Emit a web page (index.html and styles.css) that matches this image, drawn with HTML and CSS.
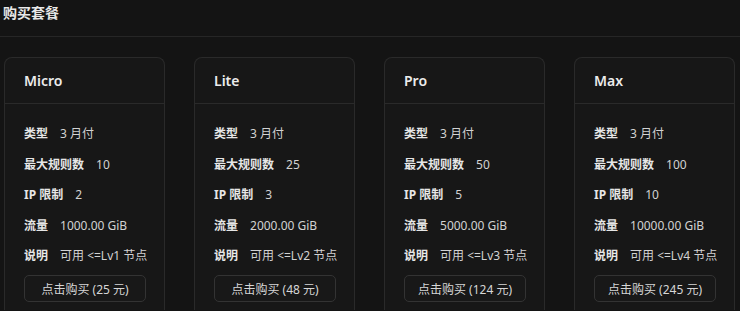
FILE: index.html
```html
<!DOCTYPE html>
<html lang="zh-CN">
<head>
<meta charset="utf-8">
<link rel="stylesheet" href="styles.css">
</head>
<body>
<div class="page">
  <div class="title-bar"><h1 class="title">购买套餐</h1></div>
  <div class="plans">
    <div class="card">
      <div class="card-head">Micro</div>
      <div class="card-body">
        <div class="row"><span class="k">类型</span><span class="v">3 月付</span></div>
        <div class="row"><span class="k">最大规则数</span><span class="v">10</span></div>
        <div class="row"><span class="k">IP 限制</span><span class="v">2</span></div>
        <div class="row"><span class="k">流量</span><span class="v">1000.00 GiB</span></div>
        <div class="row"><span class="k">说明</span><span class="v">可用 &lt;=Lv1 节点</span></div>
        <button class="buy">点击购买 (25 元)</button>
      </div>
    </div>
    <div class="card">
      <div class="card-head">Lite</div>
      <div class="card-body">
        <div class="row"><span class="k">类型</span><span class="v">3 月付</span></div>
        <div class="row"><span class="k">最大规则数</span><span class="v">25</span></div>
        <div class="row"><span class="k">IP 限制</span><span class="v">3</span></div>
        <div class="row"><span class="k">流量</span><span class="v">2000.00 GiB</span></div>
        <div class="row"><span class="k">说明</span><span class="v">可用 &lt;=Lv2 节点</span></div>
        <button class="buy">点击购买 (48 元)</button>
      </div>
    </div>
    <div class="card">
      <div class="card-head">Pro</div>
      <div class="card-body">
        <div class="row"><span class="k">类型</span><span class="v">3 月付</span></div>
        <div class="row"><span class="k">最大规则数</span><span class="v">50</span></div>
        <div class="row"><span class="k">IP 限制</span><span class="v">5</span></div>
        <div class="row"><span class="k">流量</span><span class="v">5000.00 GiB</span></div>
        <div class="row"><span class="k">说明</span><span class="v">可用 &lt;=Lv3 节点</span></div>
        <button class="buy">点击购买 (124 元)</button>
      </div>
    </div>
    <div class="card">
      <div class="card-head">Max</div>
      <div class="card-body">
        <div class="row"><span class="k">类型</span><span class="v">3 月付</span></div>
        <div class="row"><span class="k">最大规则数</span><span class="v">100</span></div>
        <div class="row"><span class="k">IP 限制</span><span class="v">10</span></div>
        <div class="row"><span class="k">流量</span><span class="v">10000.00 GiB</span></div>
        <div class="row"><span class="k">说明</span><span class="v">可用 &lt;=Lv4 节点</span></div>
        <button class="buy">点击购买 (245 元)</button>
      </div>
    </div>
  </div>
</div>
</body>
</html>
```

FILE: styles.css
```css
html, body {
  margin: 0;
  padding: 0;
  background: #141414;
  color: #e4e4e4;
  font-family: "Noto Sans", "Noto Sans CJK SC", sans-serif;
  overflow: hidden;
}
.page {
  width: 740px;
  height: 311px;
  overflow: hidden;
}
.title-bar {
  height: 36px;
  border-bottom: 1px solid #262626;
  padding-left: 3px;
}
.title {
  margin: 0;
  font-size: 14px;
  font-weight: 700;
  line-height: 26px;
  color: #e8e8e8;
}
.plans {
  display: flex;
  gap: 29px;
  padding: 20px 0 0 4px;
}
.card {
  flex: 0 0 auto;
  width: 159px;
  height: 252px;
  border: 1px solid #2a2a2a;
  border-bottom: none;
  border-radius: 8px 8px 0 0;
  background: #171717;
}
.card-head {
  height: 45px;
  border-bottom: 1px solid #2a2a2a;
  padding-left: 19px;
  font-size: 14px;
  font-weight: 600;
  line-height: 45px;
  color: #ececec;
}
.card-body {
  padding: 20px 0 0 19px;
  display: flex;
  flex-direction: column;
  align-items: flex-start;
  gap: 10.5px;
}
.row {
  display: flex;
  gap: 12px;
  font-size: 12px;
  line-height: 20px;
  white-space: nowrap;
}
.k {
  font-weight: 700;
  color: #e6e6e6;
}
.v {
  color: #d2d2d2;
}
.buy {
  margin-top: -1.5px;
  width: 122px;
  height: 27px;
  border: 1px solid #333;
  border-radius: 5px;
  background: #181818;
  color: #d6d6d6;
  font-family: inherit;
  font-size: 12px;
  padding: 0;
}
```
